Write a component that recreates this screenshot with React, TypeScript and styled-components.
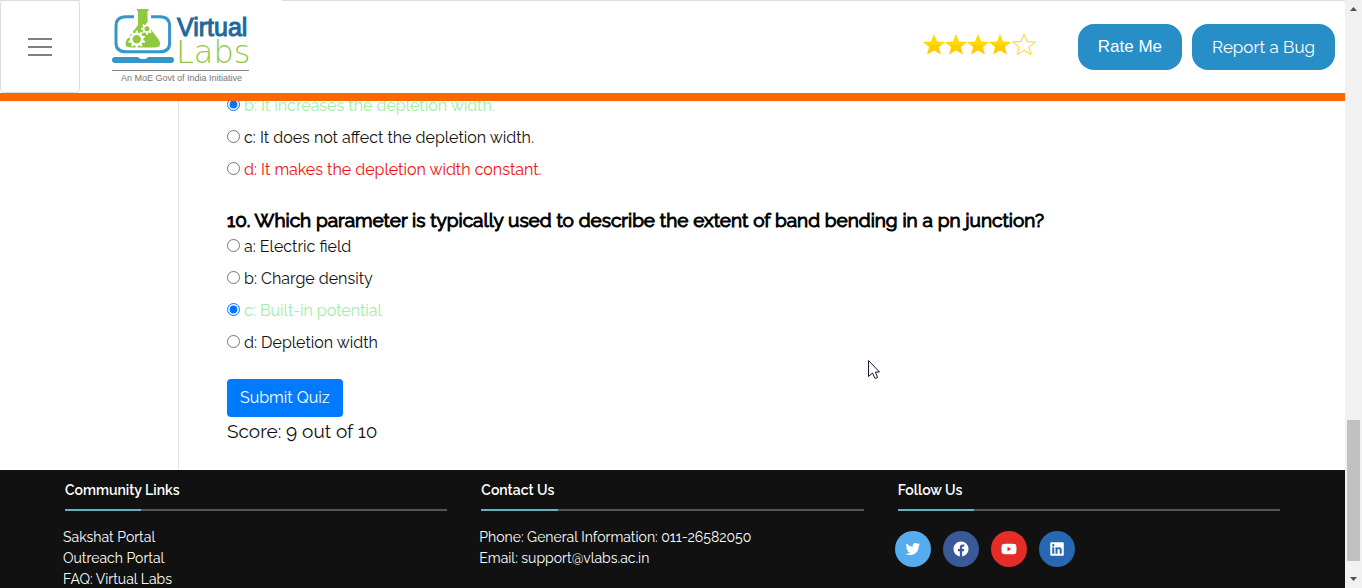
import React from "react";
import styled, { createGlobalStyle } from "styled-components";
import {
  BiLogoTwitter,
  BiLogoFacebookCircle,
  BiLogoYoutube,
  BiLogoLinkedinSquare,
} from "react-icons/bi";

const GlobalStyle = createGlobalStyle`
  *, *::before, *::after { box-sizing: border-box; }
  body {
    margin: 0;
    background: #fff;
    color: #000;
    font-family: Raleway, Lato, sans-serif;
    font-size: 16px;
    font-feature-settings: "onum" 1, "lnum" 0;
  }
`;

const Screen = styled.div`
  display: flex;
  height: 100vh;
  overflow: hidden;
`;

const Page = styled.div`
  flex: 1;
  min-width: 0;
  display: flex;
  flex-direction: column;
`;

const Header = styled.header`
  position: relative;
  z-index: 1;
  flex: none;
  display: flex;
  align-items: stretch;
  height: 101px;
  background: #fff;
  border-top: 1px solid #ddd;
  border-bottom: 8px solid #ff6600;
`;

const MenuButton = styled.button`
  width: 80px;
  margin: -1px 0 0;
  padding: 0;
  display: flex;
  flex-direction: column;
  align-items: center;
  justify-content: center;
  gap: 6px;
  background: #fff;
  border: 1px solid #ddd;
  border-radius: 4px;
`;

const MenuBar = styled.span`
  width: 24px;
  height: 2px;
  background: #808080;
`;

const LogoLink = styled.a`
  display: block;
  margin-top: -1px;
  padding: 4px 30px 0 28px;
  background: #fff;
`;

const HeaderActions = styled.div`
  margin-left: auto;
  padding-right: 10px;
  display: flex;
  align-items: center;
  gap: 10px;
`;

const Stars = styled.div`
  display: flex;
  margin: 0 32px 6px 0;
`;

const PillButton = styled.button<{ $font?: string }>`
  height: 46px;
  padding: 0 20px;
  border: 0;
  border-radius: 16px;
  background: #288ec8;
  color: #fff;
  font-family: ${(p) => p.$font ?? "inherit"};
  font-size: 17px;
`;

const Body = styled.main`
  display: flex;
  flex: none;
  margin-top: -12px;
`;

const SideColumn = styled.aside`
  width: 179px;
  border-right: 1px solid #e4e4e4;
`;

const Quiz = styled.form`
  flex: 1;
  padding: 0 48px 24px;
`;

const Question = styled.fieldset`
  margin: 0 0 21px;
  padding: 0;
  border: 0;
`;

const QuestionTitle = styled.legend`
  padding: 4px 0 0;
  font-size: 19px;
  font-weight: 400;
  line-height: 20px;
  -webkit-text-stroke: 1px currentColor;
`;

const Option = styled.label<{ $tone?: string }>`
  display: flex;
  align-items: center;
  gap: 4px;
  height: 32px;
  color: ${(p) => p.$tone ?? "#111"};
`;

const Radio = styled.input`
  width: 13px;
  height: 13px;
  margin: 0 0 2px;
`;

const SubmitButton = styled.button`
  display: block;
  height: 38px;
  padding: 0 13px 2px;
  border: 0;
  border-radius: 4px;
  background: #007bff;
  color: #fff;
  font-family: inherit;
  font-size: 16px;
`;

const Score = styled.output`
  display: block;
  font-size: 19px;
  line-height: 29px;
  color: #111;
`;

const Footer = styled.footer`
  flex: 1 0 auto;
  display: grid;
  grid-template-columns: repeat(3, 1fr);
  gap: 34px;
  padding: 10px 65px 0;
  background: #111;
  color: #fff;
  font-size: 14px;
`;

const FooterTitle = styled.h2`
  margin: 0 0 8px;
  font-size: 14px;
  font-weight: 600;
  line-height: 21px;
`;

const Rule = styled.div`
  height: 2px;
  margin-bottom: 16px;
  background: linear-gradient(to right, #63b4c0 20%, #555 20%);
`;

const Lines = styled.ul`
  margin: 0 0 0 -2px;
  padding: 0;
  list-style: none;
  line-height: 21px;
`;

const PlainLink = styled.a`
  color: inherit;
  text-decoration: none;
`;

const Socials = styled.div`
  display: flex;
  gap: 12px;
  margin: 20px 0 0 -3px;
`;

const SocialLink = styled.a<{ $bg: string }>`
  display: flex;
  align-items: center;
  justify-content: center;
  width: 36px;
  height: 36px;
  border-radius: 50%;
  background: ${(p) => p.$bg};
  color: #fff;
  font-size: 18px;
`;

const ScrollTrack = styled.div`
  flex: none;
  width: 17px;
  display: flex;
  flex-direction: column;
  align-items: center;
  justify-content: space-between;
  padding: 7px 0;
  background: #f1f1f1;
`;

const ScrollThumb = styled.div`
  width: 13px;
  height: 141px;
  margin: auto 0 16px;
  background: #c1c1c1;
`;

const Pointer = styled.svg`
  position: absolute;
  left: 868px;
  top: 360px;
  z-index: 2;
`;

const STAR = "M11 0 L14 7.5 L22.4 8 L15.8 13 L18 20.5 L11 16.4 L4 20.5 L6.2 13 L-0.4 8 L8 7.5 Z";

function Star({ filled }: { filled: boolean }) {
  return (
    <svg width={filled ? 22 : 25} height="21" viewBox={filled ? "0 0 22 21" : "-2 0 25 21"} overflow="visible">
      <defs>
        <linearGradient id="gold" x1="0" y1="0" x2="0" y2="1">
          <stop offset="0.5" stopColor="#ffdc00" />
          <stop offset="0.56" stopColor="#ffcc00" />
        </linearGradient>
      </defs>
      <path d={STAR} fill={filled ? "url(#gold)" : "#fff"} stroke={filled ? "none" : "#ffd21f"} />
    </svg>
  );
}

type GearProps = { x: number; y: number; r: number; ring: number; reach: number; teeth: number };

function Gear({ x, y, r, ring, reach, teeth }: GearProps) {
  return (
    <g transform={`translate(${x} ${y})`} fill="none" stroke="#fff">
      <circle r={r} strokeWidth={ring} />
      {Array.from({ length: teeth }, (_, i) => (
        <path key={i} d={`M0 ${-r} V${-reach}`} strokeWidth="2" transform={`rotate(${(i * 360) / teeth})`} />
      ))}
    </g>
  );
}

function Logo() {
  return (
    <svg width="144" height="84" viewBox="108 4 144 84" role="img" aria-label="Virtual Labs">
      <path
        d="M134 16.8 H126 Q116 16.8 116 26 V43 Q116 51.8 126 51.8 H160 Q169.6 51.8 169.6 43 V26 Q169.6 16.8 160 16.8 H151"
        fill="none"
        stroke="#3796c8"
        strokeWidth="3"
      />
      <path d="M112 60 Q112 57 115 57 H138 Q139 59 143 59 Q147 59 148 57 H171 Q174 57 174 60 Q174 63 171 63 H115 Q112 63 112 60 Z" fill="#3796c8" />
      <path d="M137 9 H148.500 V11 H147.500 V25 L159 40 Q162.500 47.500 155 47.500 H131 Q123 47.500 126.500 40 L138 25 V11 H137 Z" fill="#8fc93f" />
      <Gear x={136.7} y={39.3} r={5.5} ring={2.6} reach={8.6} teeth={10} />
      <Gear x={147} y={28.7} r={3.4} ring={1.8} reach={5.8} teeth={8} />
      <text x="177" y="36" fontFamily="'Liberation Sans', sans-serif" fontSize="25" fill="#20689b" stroke="#20689b">Virtual</text>
      <text x="176" y="63" fontFamily="'DejaVu Sans'" fontSize="32" fontWeight="200" fill="#8fc93f">Labs</text>
      <path d="M112 70.500 H249" stroke="#888" />
      <text x="121" y="81" fontFamily="'Liberation Sans', sans-serif" fontSize="9" fill="#777">An MoE Govt of India Initiative</text>
    </svg>
  );
}

type Choice = { id: string; text: string; tone?: string; checked?: boolean };

const previousOptions: Choice[] = [
  { id: "b", text: "It increases the depletion width.", tone: "#a0eea0", checked: true },
  { id: "c", text: "It does not affect the depletion width." },
  { id: "d", text: "It makes the depletion width constant.", tone: "#f01010" },
];

const currentOptions: Choice[] = [
  { id: "a", text: "Electric field" },
  { id: "b", text: "Charge density" },
  { id: "c", text: "Built-in potential", tone: "#a0eea0", checked: true },
  { id: "d", text: "Depletion width" },
];

function Options({ name, items }: { name: string; items: Choice[] }) {
  return (
    <>
      {items.map((o) => (
        <Option key={o.id} $tone={o.tone}>
          <Radio type="radio" name={name} defaultChecked={o.checked} />
          {o.id}: {o.text}
        </Option>
      ))}
    </>
  );
}

const socials = [
  { label: "Twitter", bg: "#55acee", Icon: BiLogoTwitter },
  { label: "Facebook", bg: "#3b5998", Icon: BiLogoFacebookCircle },
  { label: "YouTube", bg: "#e52d27", Icon: BiLogoYoutube },
  { label: "LinkedIn", bg: "#2867b2", Icon: BiLogoLinkedinSquare },
];

export default function App() {
  return (
    <Screen>
      <GlobalStyle />
      <Page>
        <Header>
          <MenuButton type="button" aria-label="Menu">
            <MenuBar />
            <MenuBar />
            <MenuBar />
          </MenuButton>
          <LogoLink href="#home">
            <Logo />
          </LogoLink>
          <HeaderActions>
            <Stars role="img" aria-label="4 out of 5 stars">
              {[1, 2, 3, 4, 5].map((n) => (
                <Star key={n} filled={n < 5} />
              ))}
            </Stars>
            <PillButton type="button" $font="'Liberation Sans', Arial, sans-serif">Rate Me</PillButton>
            <PillButton type="button">Report a Bug</PillButton>
          </HeaderActions>
        </Header>
        <Body>
          <SideColumn />
          <Quiz onSubmit={(e) => e.preventDefault()}>
            <Question>
              <Options name="q9" items={previousOptions} />
            </Question>
            <Question>
              <QuestionTitle>
                10. Which parameter is typically used to describe the extent of band bending in a pn junction?
              </QuestionTitle>
              <Options name="q10" items={currentOptions} />
            </Question>
            <SubmitButton type="submit">Submit Quiz</SubmitButton>
            <Score>Score: 9 out of 10</Score>
          </Quiz>
        </Body>
        <Footer>
          <section>
            <FooterTitle>Community Links</FooterTitle>
            <Rule />
            <Lines>
              <li><PlainLink href="#sakshat">Sakshat Portal</PlainLink></li>
              <li><PlainLink href="#outreach">Outreach Portal</PlainLink></li>
              <li><PlainLink href="#faq">FAQ: Virtual Labs</PlainLink></li>
            </Lines>
          </section>
          <section>
            <FooterTitle>Contact Us</FooterTitle>
            <Rule />
            <Lines>
              <li>Phone: General Information: 011-26582050</li>
              <li>Email: <PlainLink href="mailto:support@vlabs.ac.in">support@vlabs.ac.in</PlainLink></li>
            </Lines>
          </section>
          <section>
            <FooterTitle>Follow Us</FooterTitle>
            <Rule />
            <Socials>
              {socials.map(({ label, bg, Icon }) => (
                <SocialLink key={label} href={`#${label.toLowerCase()}`} aria-label={label} $bg={bg}>
                  <Icon />
                </SocialLink>
              ))}
            </Socials>
          </section>
        </Footer>
      </Page>
      <ScrollTrack aria-hidden="true">
        <svg width="7" height="4"><path d="M0 4 L3.5 0 L7 4 Z" fill="#505050" /></svg>
        <ScrollThumb />
        <svg width="7" height="4"><path d="M0 0 L3.5 4 L7 0 Z" fill="#505050" /></svg>
      </ScrollTrack>
      <Pointer width="13" height="20" aria-hidden="true">
        <path d="M0.5 0.5 V16.5 L4.5 13 L7 18.5 L9.5 17.5 L7.5 12 H11.5 Z" fill="#fff" stroke="#15153a" />
      </Pointer>
    </Screen>
  );
}
